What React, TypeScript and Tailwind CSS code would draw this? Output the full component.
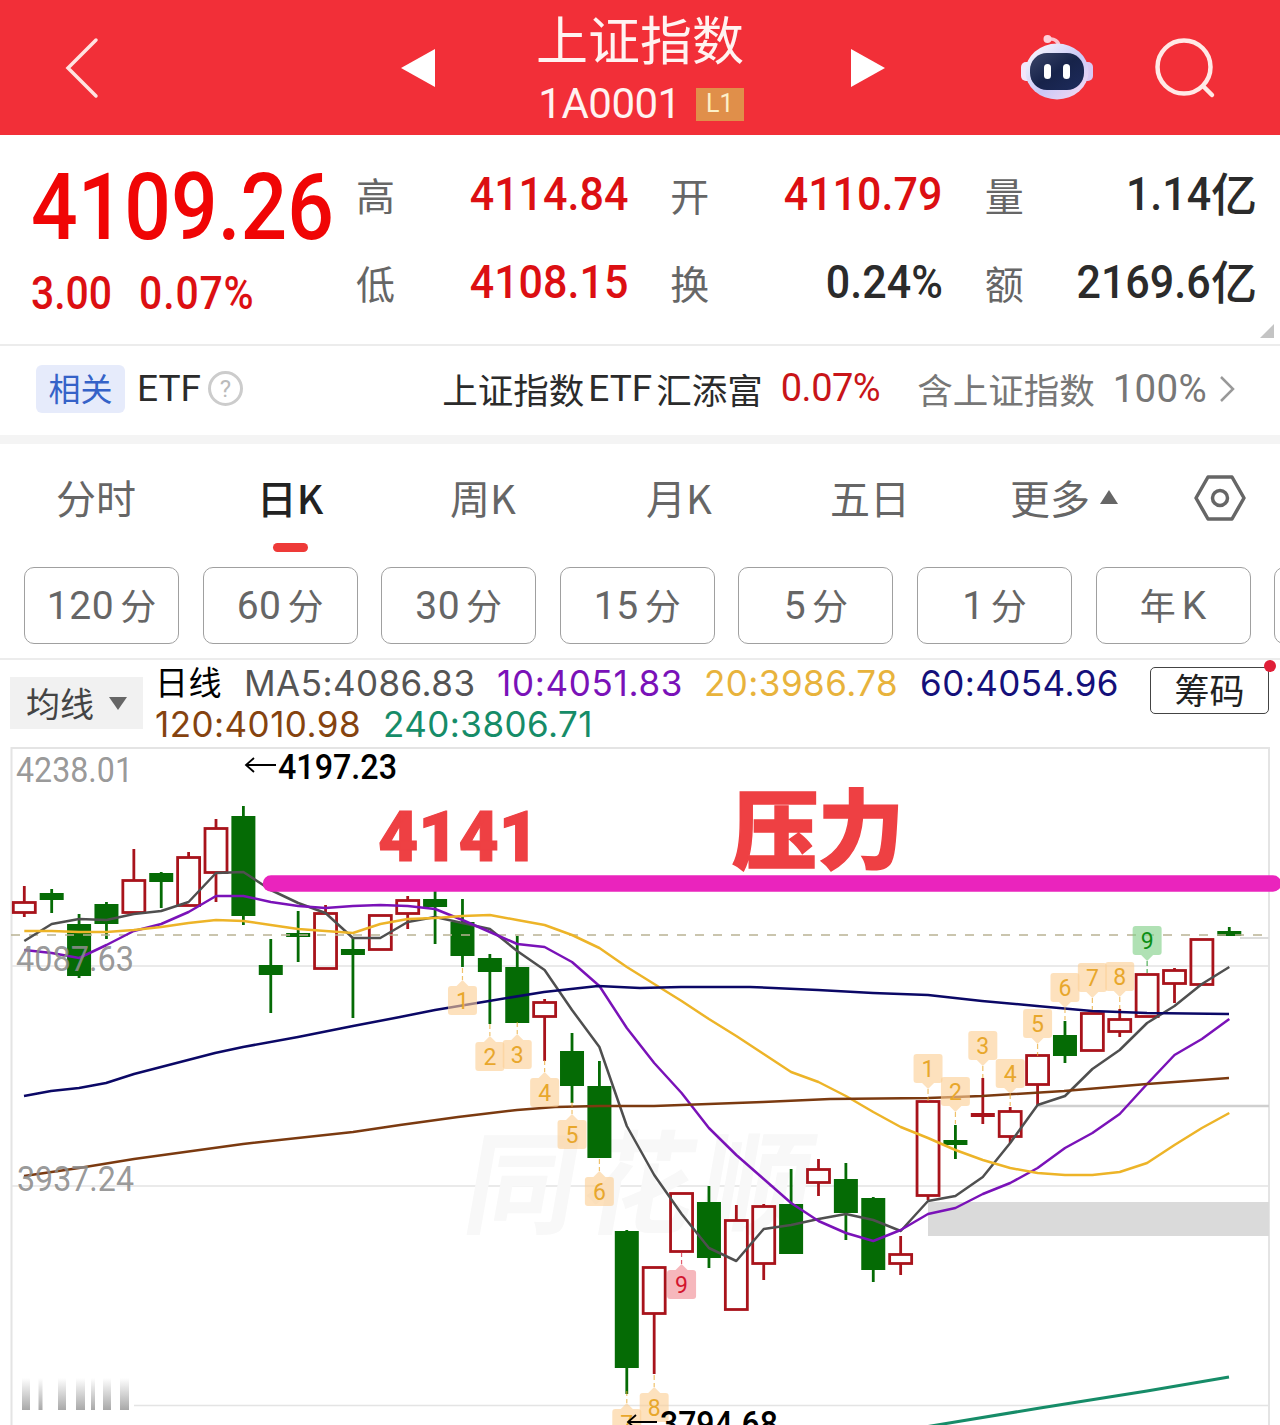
import React from 'react'

type Candle = [high: number, top: number, bottom: number, low: number, up: 0 | 1]

const STEP = 27.386
const xAt = (i: number) => 24.3 + i * STEP

const candles: Candle[] = [
  [886, 901, 914, 917, 1],
  [889, 893, 900, 913, 0],
  [914, 924, 976, 978, 0],
  [902, 904, 924, 939, 0],
  [849, 879, 914, 914, 1],
  [872, 873, 882, 908, 0],
  [852, 856, 907, 907, 1],
  [819, 827, 874, 902, 1],
  [806, 816, 916, 925, 0],
  [939, 965, 975, 1013, 0],
  [911, 933, 937, 962, 0],
  [905, 912, 970, 970, 1],
  [938, 949, 955, 1018, 0],
  [914, 914, 951, 951, 1],
  [896, 899, 915, 929, 1],
  [891, 899, 907, 944, 0],
  [899, 922, 956, 967, 0],
  [954, 958, 972, 1024, 0],
  [936, 967, 1023, 1023, 0],
  [999, 1001, 1018, 1061, 1],
  [1033, 1051, 1086, 1103, 0],
  [1061, 1086, 1158, 1158, 0],
  [1230, 1231, 1368, 1394, 0],
  [1267, 1266, 1315, 1374, 1],
  [1193, 1192, 1253, 1253, 1],
  [1186, 1202, 1258, 1268, 0],
  [1205, 1219, 1311, 1311, 1],
  [1204, 1205, 1265, 1280, 1],
  [1169, 1204, 1254, 1254, 0],
  [1159, 1168, 1184, 1196, 1],
  [1163, 1179, 1213, 1240, 0],
  [1197, 1198, 1270, 1282, 0],
  [1236, 1253, 1265, 1275, 1],
  [1101, 1100, 1197, 1200, 1],
  [1125, 1140, 1145, 1159, 0],
  [1078, 1113, 1117, 1124, 1],
  [1107, 1110, 1138, 1143, 1],
  [1055, 1054, 1086, 1105, 1],
  [1021, 1035, 1056, 1063, 0],
  [1013, 1012, 1052, 1052, 1],
  [1009, 1018, 1033, 1037, 1],
  [974, 973, 1018, 1018, 1],
  [968, 969, 985, 1003, 1],
  [938, 938, 986, 986, 1],
  [927, 931, 936, 936, 0],
]

const ma5 = [
  941, 924, 919, 920, 914, 911, 902, 873, 872, 890, 903, 913, 938, 938, 922, 917, 923, 929, 951, 970, 1010, 1047, 1126,
  1175, 1214, 1248, 1261, 1229, 1225, 1219, 1214, 1220, 1231, 1201, 1196, 1177, 1143, 1105, 1096, 1069, 1050, 1023,
  1006, 984, 967,
]
const ma10 = [
  950, 953, 958, 945, 931, 924, 912, 896, 896, 902, 906, 908, 906, 905, 906, 909, 920, 932, 944, 947, 962, 986, 1028,
  1063, 1093, 1128, 1155, 1179, 1203, 1221, 1233, 1241, 1230, 1214, 1208, 1194, 1183, 1168, 1148, 1133, 1114, 1084,
  1055, 1039, 1019,
]
const ma20 = [
  931, 931, 932, 932, 930, 927, 923, 920, 921, 925, 929, 931, 933, 924, 919, 918, 916, 915, 920, 925, 935, 948, 967,
  984, 1001, 1019, 1036, 1054, 1072, 1082, 1096, 1112, 1127, 1138, 1150, 1160, 1168, 1173, 1175, 1175, 1172, 1163,
  1145, 1128, 1113,
]
const ma60 =
  '24,1096 51,1091 79,1088 106,1083 134,1074 161,1067 188,1060 215,1053 243,1047 298,1037 353,1026 400,1017 435,1010 489,1001 544,992 598,986 640,988 681,987 750,987 818,990 873,993 928,995 982,1001 1037,1006 1092,1011 1147,1013 1229,1014'
const ma120 =
  '24,1176 79,1168 134,1159 243,1144 353,1132 400,1125 458,1117 517,1110 555,1107 599,1106 654,1106 763,1102 830,1099 928,1098 982,1096 1064,1091 1147,1084 1229,1078'
const ma240 = '925,1427 1040,1408 1147,1391 1229,1377'

const toPoints = (ys: number[]) => ys.map((y, i) => `${xAt(i).toFixed(1)},${y}`).join(' ')

interface TagProps {
  i: number
  y: number
  n: number
  side: 'above' | 'below'
  tone?: 'orange' | 'red' | 'green'
}

const tones = {
  orange: ['#fbcf94', '#e8a72c'],
  red: ['#f08b93', '#d3152f'],
  green: ['#7fcf86', '#0b8f14'],
}

const tags: TagProps[] = [
  { i: 16, y: 986, n: 1, side: 'below' },
  { i: 17, y: 1042, n: 2, side: 'below' },
  { i: 18, y: 1040, n: 3, side: 'below' },
  { i: 19, y: 1078, n: 4, side: 'below' },
  { i: 20, y: 1120, n: 5, side: 'below' },
  { i: 21, y: 1177, n: 6, side: 'below' },
  { i: 22, y: 1409, n: 7, side: 'below' },
  { i: 23, y: 1393, n: 8, side: 'below' },
  { i: 24, y: 1270, n: 9, side: 'below', tone: 'red' },
  { i: 33, y: 1054, n: 1, side: 'above' },
  { i: 34, y: 1077, n: 2, side: 'above' },
  { i: 35, y: 1031, n: 3, side: 'above' },
  { i: 36, y: 1059, n: 4, side: 'above' },
  { i: 37, y: 1009, n: 5, side: 'above' },
  { i: 38, y: 973, n: 6, side: 'above' },
  { i: 39, y: 963, n: 7, side: 'above' },
  { i: 40, y: 962, n: 8, side: 'above' },
  { i: 41, y: 926, n: 9, side: 'above', tone: 'green' },
]

function Tag({ i, y, n, side, tone = 'orange' }: TagProps) {
  const x = xAt(i)
  const [bg, fg] = tones[tone]
  const tip = side === 'below' ? `M${x - 6} ${y} L${x} ${y - 6} L${x + 6} ${y}Z` : `M${x - 6} ${y + 29} L${x} ${y + 35} L${x + 6} ${y + 29}Z`
  const [y1, y2] = side === 'below' ? [y - 18, y - 6] : [y + 35, y + 47]
  return (
    <g>
      <line x1={x} x2={x} y1={y1} y2={y2} stroke={fg} strokeOpacity={0.7} strokeWidth={1.2} strokeDasharray="5 3" />
      <g fill={bg} fillOpacity={0.62}>
        <rect x={x - 14.5} y={y} width={29} height={29} rx={3} />
        <path d={tip} />
      </g>
      <text x={x} y={y + 23} textAnchor="middle" fontSize={23} fill={fg} className="font-[Roboto,sans-serif]">
        {n}
      </text>
    </g>
  )
}

function CandleMark({ c, i }: { c: Candle; i: number }) {
  const [high, top, bottom, low, up] = c
  const x = xAt(i)
  const color = up ? '#a8131b' : '#056b05'
  const thin = bottom - top < 6
  return (
    <g stroke={color}>
      {high < top && <line x1={x} x2={x} y1={high} y2={top + 1} strokeWidth={2.8} />}
      {low > bottom && <line x1={x} x2={x} y1={bottom - 1} y2={low} strokeWidth={2.8} />}
      {up && !thin ? (
        <rect x={x - 11} y={top + 1.5} width={22} height={bottom - top - 3} fill="none" strokeWidth={2.8} />
      ) : (
        <rect x={x - 12} y={top} width={24} height={bottom - top} fill={color} stroke="none" />
      )}
    </g>
  )
}

function Chart() {
  return (
    <svg viewBox="0 745 1280 680" width={1280} height={680} className="block font-[Roboto,sans-serif]">
      <defs>
        <linearGradient id="fade" x1="0" y1="0" x2="0" y2="1">
          <stop offset="0" stopColor="#999" stopOpacity="0" />
          <stop offset="1" stopColor="#999" stopOpacity="0.85" />
        </linearGradient>
      </defs>

      <g stroke="#e4e4e4" fill="none">
        <path d="M11.5 1425V748H1269V1425" strokeWidth={2} />
        <path d="M11 966H1269M11 1186H1269M134 1405.500H1269" strokeWidth={1.5} />
      </g>

      <text
        x={0}
        y={0}
        transform="translate(460 1225) skewX(-10)"
        fontSize={112}
        textLength={346}
        fill="#f8f8f8"
        className="font-['Noto_Sans_CJK_SC',sans-serif] font-bold"
      >
        同花顺
      </text>

      <rect x={928} y={1202} width={341} height={34} fill="#dadada" />
      <path d="M1037 1106H1269" stroke="#cfcfcf" strokeWidth={2.5} />
      <path d="M1240 938H1269" stroke="#ddd" strokeWidth={2} />

      {candles.map((c, i) => (
        <CandleMark key={i} c={c} i={i} />
      ))}

      <line x1={11} x2={1269} y1={935} y2={935} stroke="#b9b394" strokeWidth={1.3} strokeDasharray="9 9" />

      <g fill="none" strokeWidth={2.5} strokeLinejoin="round">
        <polyline points={toPoints(ma5)} stroke="#4f4f4f" />
        <polyline points={toPoints(ma10)} stroke="#7a12b8" />
        <polyline points={toPoints(ma20)} stroke="#edb428" />
        <polyline points={ma60} stroke="#0b0866" />
        <polyline points={ma120} stroke="#7b3a10" />
        <polyline points={ma240} stroke="#168c68" strokeWidth={3} />
      </g>

      {tags.map((t) => (
        <Tag key={`${t.i}-${t.n}`} {...t} />
      ))}

      <g fill="#8c8c8c" fillOpacity={0.9} fontSize={34.5}>
        <text x={16} y={782} textLength={117} lengthAdjust="spacingAndGlyphs">4238.01</text>
        <text x={16} y={971} textLength={118} lengthAdjust="spacingAndGlyphs">4087.63</text>
        <text x={17} y={1191} textLength={117} lengthAdjust="spacingAndGlyphs">3937.24</text>
      </g>

      <g fontSize={34.5} fill="#000" className="font-medium">
        <text x={278} y={778.5} textLength={119} lengthAdjust="spacingAndGlyphs">4197.23</text>
        <text x={660} y={1436} textLength={118} lengthAdjust="spacingAndGlyphs">3794.68</text>
      </g>
      <g stroke="#000" strokeWidth={1.8} fill="none">
        <path d="M276 765H246M254 758L246 765L254 772" />
        <path d="M657 1422H628M636 1415L628 1422L636 1429" />
      </g>

      {/* faded bars in the lower left corner */}
      {[[22, 8], [38.5, 4], [58, 8], [76, 9], [91, 4], [103, 8], [120, 9]].map(([x, w]) => (
        <rect key={x} x={x} y={1378} width={w} height={32} fill="url(#fade)" />
      ))}

      <path d="M271 883.500H1273" stroke="#ea24bd" strokeWidth={16.5} strokeLinecap="round" />
      <g fill="#ee4043" className="font-black">
        <text x={378} y={861} fontSize={70} textLength={161} lengthAdjust="spacingAndGlyphs" stroke="#ee4043" strokeWidth={1.2}>
          4141
        </text>
        <text x={732} y={862} fontSize={86} textLength={172} lengthAdjust="spacingAndGlyphs" className="font-['Noto_Sans_CJK_SC',sans-serif]" stroke="#ee4043" strokeWidth={1.5}>
          压力
        </text>
      </g>
    </svg>
  )
}

function Robot() {
  return (
    <svg width="72" height="66" viewBox="0 0 72 66" className="block">
      <defs>
        <linearGradient id="shell" x1="0" y1="0" x2="1" y2="1">
          <stop offset="0" stopColor="#fff" />
          <stop offset="0.55" stopColor="#c9c8f6" />
          <stop offset="1" stopColor="#fbdcf3" />
        </linearGradient>
        <linearGradient id="face" x1="0" y1="0" x2="1" y2="1">
          <stop offset="0" stopColor="#3b4569" />
          <stop offset="0.5" stopColor="#17234a" />
          <stop offset="1" stopColor="#1d2b5c" />
        </linearGradient>
      </defs>
      <path d="M38 12C38 6 33 3 27 4.500" fill="none" stroke="#fbc3cf" strokeWidth="3.500" />
      <circle cx="26.500" cy="4" r="4" fill="#fdd0da" />
      <rect x="0" y="27" width="12" height="19" rx="5" fill="#f3e6fb" />
      <rect x="60" y="27" width="12" height="19" rx="5" fill="#d9c8f3" />
      <ellipse cx="36" cy="36.500" rx="31.500" ry="28" fill="url(#shell)" />
      <rect x="9" y="18" width="54" height="37" rx="17" fill="url(#face)" />
      <rect x="23" y="29" width="7" height="15" rx="3.500" fill="#fff" />
      <rect x="42" y="29" width="7" height="15" rx="3.500" fill="#fff" />
    </svg>
  )
}

function Header() {
  return (
    <header className="flex h-[135px] items-center bg-[#f22f38] text-[#fff3f1]">
      <svg width="36" height="62" viewBox="0 0 36 62" className="ml-[64px]" fill="none" stroke="#ffe3e1" strokeWidth="3.500" strokeLinecap="round">
        <path d="M32 3L4 31L32 59" />
      </svg>
      <svg width="34" height="38" viewBox="0 0 34 38" className="ml-[301px]" fill="#fff">
        <path d="M0 19L34 0V38Z" />
      </svg>
      <div className="ml-[80px] flex h-[135px] w-[250px] flex-col items-center">
        <div className="h-[73px] text-[52px] leading-[76px]">上证指数</div>
        <div className="flex h-[62px] items-center gap-[15px] pl-[2px] font-[Roboto,sans-serif]">
          <span className="text-[42px] leading-[56px] tracking-[-0.5px]">1A0001</span>
          <span className="flex h-[33px] w-[48px] items-center justify-center bg-[#e08f4a] text-[25px] text-[#fdf0c8]">L1</span>
        </div>
      </div>
      <svg width="34" height="38" viewBox="0 0 34 38" className="ml-[86px]" fill="#fff">
        <path d="M34 19L0 0V38Z" />
      </svg>
      <div className="ml-[136px]">
        <Robot />
      </div>
      <svg width="62" height="62" viewBox="0 0 62 62" className="mt-[2px] ml-[61px]" fill="none" stroke="#ffe9e6" strokeWidth="4.500" strokeLinecap="round">
        <circle cx="30" cy="29" r="26.500" />
        <path d="M49 48L58 57" />
      </svg>
    </header>
  )
}

function Stat({ label, value, unit, red }: { label: string; value: string; unit?: string; red?: boolean }) {
  return (
    <div className="flex h-[88px] items-center justify-between">
      <span className="text-[39px] text-[#666]">{label}</span>
      <span className={`flex items-center font-medium ${red ? 'text-[#dc0f12]' : 'text-[#2b2b2b]'}`}>
        <span className="origin-right scale-x-[0.915] font-[Roboto,sans-serif] text-[47px]">{value}</span>
        {unit && <span className="pb-[6px] text-[46px]">{unit}</span>}
      </span>
    </div>
  )
}

function Quote() {
  return (
    <section className="relative flex h-[209px] pl-[31px] pr-[23px]">
      <div className="w-[325px] shrink-0 font-[Roboto,sans-serif] font-medium">
        <div className="mt-[18px] h-[110px] origin-left scale-x-[0.883] text-[93px] leading-[110px] text-[#f00505]">4109.26</div>
        <div className="flex origin-left scale-x-[0.87] gap-[31px] text-[47px] leading-[60px] text-[#dc0f12]">
          <span>3.00</span>
          <span className="tracking-[1px]">0.07%</span>
        </div>
      </div>
      <div className="mt-[15px] grid h-[176px] flex-1 grid-cols-3 gap-x-[42px]">
        <Stat label="高" value="4114.84" red />
        <Stat label="开" value="4110.79" red />
        <Stat label="量" value="1.14" unit="亿" />
        <Stat label="低" value="4108.15" red />
        <Stat label="换" value="0.24%" />
        <Stat label="额" value="2169.6" unit="亿" />
      </div>
      <svg width="14" height="14" viewBox="0 0 14 14" className="absolute right-[6px] bottom-[6px]">
        <path d="M14 0V14H0Z" fill="#c4c4c4" />
      </svg>
    </section>
  )
}

function Related() {
  return (
    <section className="flex h-[100px] items-center border-t-2 border-b-9 border-t-[#ececec] border-b-[#f4f4f4] pr-[45px] pb-[4px] pl-[36px] text-[35.5px]">
      <span className="flex h-[48px] w-[89px] items-center justify-center rounded-[6px] bg-[#e6ebfb] pb-[4px] text-[32px] text-[#3562c8]">相关</span>
      <span className="ml-[12px] font-[Roboto,sans-serif] text-[37px] text-[#2b2b2b]">ETF</span>
      <span className="ml-[7px] flex size-[35px] items-center justify-center rounded-full border-3 border-[#ccc] font-[Roboto,sans-serif] text-[24px] text-[#bbb]">?</span>
      <span className="ml-auto flex items-center text-[#2b2b2b]">
        上证指数<span className="mx-[4px] font-[Roboto,sans-serif] text-[37px]">ETF</span>汇添富
      </span>
      <span className="ml-[18px] font-[Roboto,sans-serif] text-[38px] tracking-[-0.5px] text-[#c81418]">0.07%</span>
      <span className="ml-[37px] text-[#777]">含上证指数</span>
      <span className="ml-[18px] font-[Roboto,sans-serif] text-[38.5px] tracking-[0.3px] text-[#777]">100%</span>
      <svg width="16" height="26" viewBox="0 0 16 26" className="ml-[12px]" fill="none" stroke="#999" strokeWidth="2.500">
        <path d="M2 1L14 13L2 25" />
      </svg>
    </section>
  )
}

function Tabs() {
  return (
    <nav className="flex h-[114px] pt-[23px] text-[40px] leading-[60px] text-[#666]">
      <span className="w-[192px] text-center">分时</span>
      <span className="flex w-[196px] flex-col items-center font-medium text-[#222]">
        日K
        <i className="mt-[16px] block h-[9px] w-[35px] rounded-full bg-[#ee3a38]" />
      </span>
      <span className="w-[190px] text-center">周K</span>
      <span className="w-[202px] text-center">月K</span>
      <span className="w-[180px] text-center">五日</span>
      <span className="ml-[50px] flex items-center gap-[10px] self-start">
        更多
        <svg width="18" height="14" viewBox="0 0 18 14" fill="#666">
          <path d="M9 0L18 14H0Z" />
        </svg>
      </span>
      <svg width="52" height="46" viewBox="0 0 52 46" className="mt-[8px] ml-[76px]" fill="none" stroke="#666" strokeWidth="3.500" strokeLinejoin="round">
        <path d="M14 2H38L50 23L38 44H14L2 23Z" />
        <circle cx="26" cy="23" r="7.500" />
      </svg>
    </nav>
  )
}

const periods = ['120', '60', '30', '15', '5', '1']

function Periods() {
  const box = 'flex h-[77px] w-[155px] shrink-0 items-center justify-center gap-[6px] rounded-[10px] border-[1.5px] border-[#a0a0a0]'
  return (
    <div className="flex h-[102px] gap-[23.6px] overflow-hidden border-b-2 border-[#ececec] pt-[9px] pl-[24px] text-[36px] text-[#666]">
      {periods.map((n) => (
        <span key={n} className={box}>
          <span className="pt-[2px] font-[Roboto,sans-serif] text-[39px] tracking-[0.5px]">{n}</span>
          <span className="pb-[4px]">分</span>
        </span>
      ))}
      <span className={box}>
        <span className="pb-[4px]">年</span>
        <span className="pt-[2px] font-[Roboto,sans-serif] text-[39px]">K</span>
      </span>
      <span className={box} />
    </div>
  )
}

function Averages() {
  return (
    <div className="flex h-[85px] pl-[10px]">
      <div className="mt-[17px] flex h-[52px] w-[133px] items-center justify-center gap-[15px] bg-[#f1f1f1] text-[34px] text-[#444]">
        <span className="pb-[2px]">均线</span>
        <svg width="18" height="13" viewBox="0 0 18 13" fill="#666">
          <path d="M0 0H18L9 13Z" />
        </svg>
      </div>
      <div className="ml-[12px] w-[983px] font-[Inter,'Noto_Sans_CJK_SC',sans-serif] text-[35px] leading-[41px] tracking-[0.45px] whitespace-nowrap">
        <div className="mt-[3px] flex">
          <span className="w-[89px] text-[33px] text-black">日线</span>
          <span className="w-[253px] text-[#555]">MA5:4086.83</span>
          <span className="w-[207px] tracking-[0.7px] text-[#7a12b8]">10:4051.83</span>
          <span className="w-[216px] text-[#e8b33c]">20:3986.78</span>
          <span className="text-[#14107a]">60:4054.96</span>
        </div>
        <div className="flex">
          <span className="w-[228px] text-[#85430f]">120:4010.98</span>
          <span className="text-[#168c68]">240:3806.71</span>
        </div>
      </div>
      <div className="relative mt-[7px] ml-[12px] flex h-[47px] w-[119px] items-center justify-center rounded-[5px] border-[1.5px] border-[#444] pb-[3px] text-[35px] text-[#222]">
        筹码
        <i className="absolute top-[-8px] right-[-8px] block size-[12px] rounded-full bg-[#e01f38]" />
      </div>
    </div>
  )
}

export default function App() {
  return (
    <div className="h-[1425px] w-[1280px] overflow-hidden bg-white font-['Noto_Sans_CJK_SC',sans-serif]">
      <Header />
      <Quote />
      <Related />
      <Tabs />
      <Periods />
      <Averages />
      <Chart />
    </div>
  )
}
